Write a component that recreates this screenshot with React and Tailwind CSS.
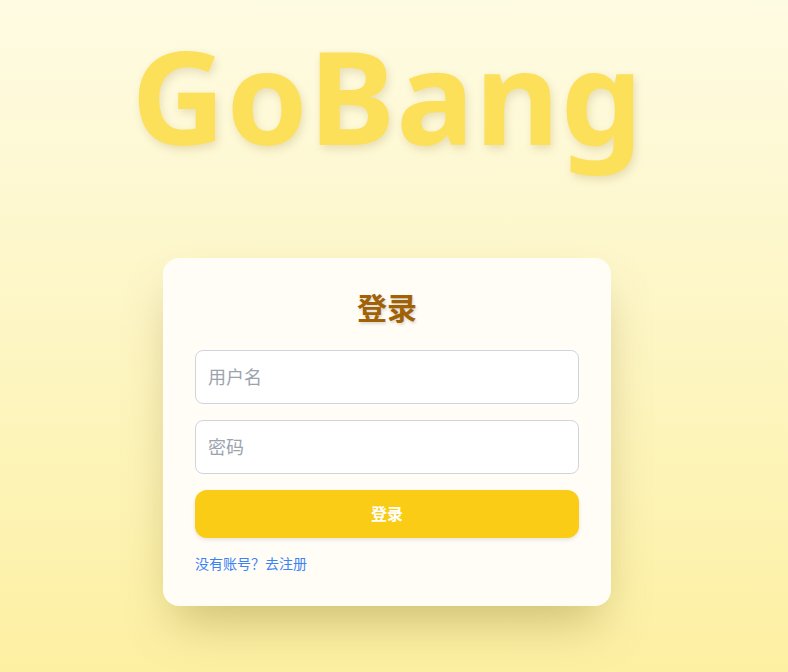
export default function App() {
  return (
    <div
      className="min-h-[672px] w-full bg-gradient-to-b from-[#fefbe3] to-[#fdf0a2]"
      style={{ fontFamily: '"Noto Sans", "Noto Sans CJK SC", sans-serif' }}
    >
      <div className="w-[774px] flex flex-col items-center">
        <h1 className="mt-[7px] pl-[1px] text-[130px] leading-[1.36] font-bold text-[#fce05a] [text-shadow:2px_4px_8px_rgba(120,90,0,0.16)] tracking-[1px]">
          GoBang
        </h1>
        <div className="mt-[74px] w-[448px] bg-[#fffdf6] rounded-2xl shadow-[0_25px_50px_-12px_rgba(110,90,0,0.35)] p-8">
          <h2 className="text-center text-[30px] leading-[36px] font-bold text-[#a16207] [text-shadow:1px_2px_3px_rgba(0,0,0,0.15)]">
            登录
          </h2>
          <div className="mt-6 flex flex-col gap-4">
            <input
              className="w-full h-[54px] px-3 rounded-lg border border-[#d1d5db] bg-white text-lg outline-none placeholder:text-[#9ca3af]"
              placeholder="用户名"
            />
            <input
              type="password"
              className="w-full h-[54px] px-3 rounded-lg border border-[#d1d5db] bg-white text-lg outline-none placeholder:text-[#9ca3af]"
              placeholder="密码"
            />
            <button className="w-full h-12 rounded-xl bg-[#facc15] text-white font-bold text-base shadow-[0_2px_4px_rgba(0,0,0,0.1)]">
              登录
            </button>
          </div>
          <div className="mt-4 text-sm leading-5 text-[#3b82f6]">没有账号？去注册</div>
        </div>
      </div>
    </div>
  );
}
